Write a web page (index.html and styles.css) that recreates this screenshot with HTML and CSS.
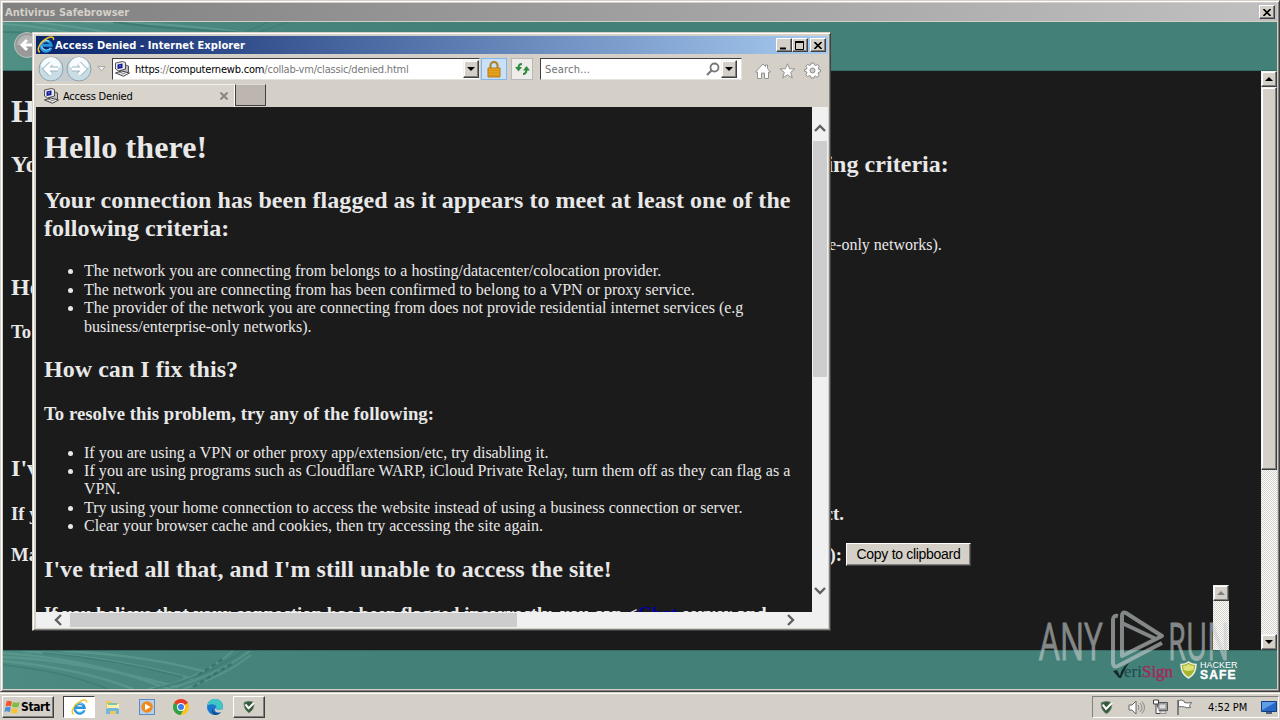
FILE: index.html
```html
<!DOCTYPE html>
<html lang="en">
<head>
<meta charset="UTF-8" />
<title>Antivirus Safebrowser</title>
<link rel="stylesheet" href="styles.css">
</head>
<body>

<!-- shared icons -->
<svg class="defs" width="0" height="0">
  <symbol id="ie" viewBox="0 0 16 16">
    <path d="M12.500 10.500A4.600 4.600 0 1 1 12.700 8.300H4.500" fill="none" stroke="#2793dd" stroke-width="2.400"/>
    <path d="M12 10.700A4.500 4.500 0 0 1 4 9M5 5.500q3-3 6-.5" fill="none" stroke="#85d4fa" stroke-width="0.9"/>
    <path d="M2.500 14.500C-1 12 3 5 9 2c4-2 6.500-1 5.500 1.500" fill="none" stroke="#f3c51f" stroke-width="1.300"/>
  </symbol>
  <symbol id="pc" viewBox="0 0 16 16">
    <path d="M9 3l5 2v6l-5 2-5-3z" fill="#bbb" stroke="#333" stroke-width="0.8"/>
    <path d="M1 2l7-1.500 3 1v6.500L4 10 1 8z" fill="#e8e8e8" stroke="#444" stroke-width="0.9"/>
    <path d="M3 3.500l5-1v4.500l-5 1z" fill="#101c9c"/>
    <path d="M5 4.500l1-.3v1l-1 .3z" fill="#fff"/>
    <path d="M1 12l6-2 8 2-6 3.200z" fill="#eee" stroke="#333" stroke-width="0.9"/>
    <path d="M4 12l4-1M7 13l4-1" stroke="#888"/>
  </symbol>
  <symbol id="shield" viewBox="0 0 16 16">
    <path d="M8 1.500l5.500 1.200c.5 6-1.500 9.300-5.500 11.800C4 12 2 8.700 2.500 2.700z" fill="#35593a" stroke="#64846a"/>
    <path d="M4 5l3.500 4.500L14 3" fill="none" stroke="#fff" stroke-width="2.300"/>
  </symbol>
</svg>

<div class="desktop">
  <div class="safebrowser">
    <div class="safe-title"><span>Antivirus Safebrowser</span>
      <button class="winbtn"><svg width="8" height="7" viewBox="0 0 8 7"><path d="M.5 0l7 7M7.500 0l-7 7" stroke="#000" stroke-width="1.600"/></svg></button>
    </div>
    <div class="safe-top">
      <svg class="swoosh" width="830" height="48">
        <g fill="none" stroke="#7bb5a8" opacity=".35">
          <path d="M0 2q90 5 180 46M30 0q100 10 210 42M80 0q100 0 200 16" stroke-width="2"/>
          <path d="M0 10q90 0 200 38M110 0q60 8 160 12" stroke="#29655d" stroke-width="2"/>
          <path d="M235 14L265 0M245 14L285 0" stroke="#2f6b64"/>
        </g>
      </svg>
      <svg class="back" width="26" height="26" viewBox="0 0 26 26"><circle cx="13" cy="13" r="12.500" fill="#999" stroke="#b9c4c0"/><path d="M3 13a10 10 0 0 1 20 0z" fill="#b5b5b5"/><path d="M21 13H8M13 8l-5 5 5 5" fill="none" stroke="#fff" stroke-width="3"/></svg>
    </div>
    <div class="safe-body">
      <div class="page">
        <h1>Hello there!</h1>
        <h2>Your connection has been flagged as it appears to meet at least one of the following criteria:</h2>
        <ul>
          <li>The network you are connecting from belongs to a hosting/datacenter/colocation provider.</li>
          <li>The network you are connecting from has been confirmed to belong to a VPN or proxy service.</li>
          <li>The provider of the network you are connecting from does not provide residential internet services (e.g business/enterprise-only networks).</li>
        </ul>
        <h2>How can I fix this?</h2>
        <h3>To resolve this problem, try any of the following:</h3>
        <ul>
          <li>If you are using a VPN or other proxy app/extension/etc, try disabling it.</li>
          <li>If you are using programs such as Cloudflare WARP, iCloud Private Relay, turn them off as they can flag as a VPN.</li>
          <li>Try using your home connection to access the website instead of using a business connection or server.</li>
          <li>Clear your browser cache and cookies, then try accessing the site again.</li>
        </ul>
        <h2>I've tried all that, and I'm still unable to access the site!</h2>
        <h3 class="split"><span>If you believe that your connection</span><span>contact.</span></h3>
        <h3 class="split copy"><span>Make sure to include</span><span>(required):</span><button>Copy to clipboard</button></h3>
        <div class="textarea-bar"><div class="cbtn off"><i class="up"></i></div></div>
      </div>
      <div class="classic-scroll">
        <div class="cbtn"><i class="up"></i></div>
        <div class="cthumb"></div>
        <div class="cbtn last"><i class="down"></i></div>
      </div>
    </div>
    <div class="safe-bottom">
      <svg class="swoosh" width="260" height="38">
        <g fill="none" stroke="#6eaa9e" opacity=".4" stroke-width="2.500">
          <path d="M0 2q90 6 165 36M20 0q90 6 170 28M60 0q80 4 140 20M0 10q80 8 130 28M0 6q70 2 175 30"/>
          <path d="M165 38q50-14 82-38M180 38q40-12 68-34M145 38q50-8 85-38" stroke-width="2"/>
          <path d="M40 2q70 6 140 24M0 14q60 6 105 24M150 38q50-10 90-38" stroke="#356f68" stroke-width="1.500"/>
          <path d="M195 24l25-16M190 36l40-24" stroke="#245f59" stroke-dasharray="5 3"/>
        </g>
      </svg>
      <div class="seals">
        <div class="verisign"><svg width="18" height="20" viewBox="0 0 18 20"><path d="M1 9l4-1 3 6c1-6 4-10 9-13-4 5-6 11-8 15H7z" fill="#17282b"/></svg><span>eri</span><b>Sign</b></div>
        <svg class="gold" width="17" height="18" viewBox="0 0 17 18"><path d="M8.500 1Q12 3.500 16 3.500 16 13 8.500 17 1 13 1 3.500 5 3.500 8.500 1z" fill="#a7b52a" stroke="#e9efe6" stroke-width="1.500"/><path d="M3 5q4 0 5.500-2Q11 5 14 5q0 3-1 4-5 2-9 0-1-2-1-4z" fill="#dde27b"/></svg>
        <div class="hacker"><span>HACKER</span><b>SAFE</b></div>
      </div>
    </div>
  </div>

  <div class="taskbar">
    <button class="start"><svg width="17" height="16" viewBox="0 0 17 16"><path d="M2.500 2.500Q5 1 8 3L7 7.500Q4 6 1.500 7.500z" fill="#ee5a2b"/><path d="M9 3q3 1.500 6.500 0l-1 5Q11 9 8 7.500z" fill="#7dbd42"/><path d="M1.300 8.500q3-1.500 5.500.3l-1 4.500q-3-2-5.300-.3z" fill="#4a91d8"/><path d="M8 9q3 1.500 6 .3L13 14q-3 1.300-6-.5z" fill="#f7c331"/></svg>Start</button>
    <div class="task active"><svg width="17" height="17"><use href="#ie"/></svg></div>
    <div class="task"><svg width="18" height="18" viewBox="0 0 18 18"><path d="M2 3h5l1 2h7v11H2z" fill="#e9c95b"/><path d="M3 6h12v5H3z" fill="#fbf0b0"/><path d="M4 5h9v2H4z" fill="#7cc4a4"/><path d="M2 16v-4q0-2 2-2h9q2 0 2 2v4h-3v-3H6v3z" fill="#73b6dc"/></svg></div>
    <div class="task"><svg width="16" height="16" viewBox="0 0 16 16"><rect x=".5" y=".5" width="15" height="15" fill="#b5d0ee" stroke="#5c8bbf"/><circle cx="8" cy="8" r="5.800" fill="#f18a1c"/><path d="M6 4.800l5.500 3.200L6 11.200z" fill="#fff"/></svg></div>
    <div class="task"><svg width="16" height="16" viewBox="0 0 16 16"><circle cx="8" cy="8" r="8" fill="#fcc31e"/><path d="M8 8L1.100 4A8 8 0 0 1 14.900 4z" fill="#e33b2e"/><path d="M1.100 4A8 8 0 0 0 7.500 16L11 10 8 8z" fill="#2ba24c"/><circle cx="8" cy="8" r="4" fill="#fff"/><circle cx="8" cy="8" r="3" fill="#3f7de8"/></svg></div>
    <div class="task"><svg width="16" height="16" viewBox="0 0 16 16"><circle cx="8" cy="8" r="8" fill="#1978cf"/><path d="M.3 7C1 2 4.500 0 8 0c5 0 8 3.500 8 7 0 3-2.500 4-4.500 4S9 10 9.500 8.500C9.500 5 3 4 .3 7z" fill="#40c6c3"/><path d="M9.500 8.500c-1 1.500 0 2.500 2 2.500s3.500-.5 4-2v3.500l-1 .5c-5 2-9-2-5-4.500z" fill="#d4d0c8"/><path d="M5.500 9c0 4 3.500 6.500 8.500 4.500A8 8 0 0 1 8 16c-3-1-4-4-2.500-7z" fill="#114a8c"/></svg></div>
    <div class="task raised"><svg width="14" height="14"><use href="#shield"/></svg></div>
    <div class="tray">
      <svg width="15" height="15"><use href="#shield"/></svg>
      <svg width="17" height="15" viewBox="0 0 17 15"><path d="M1 5h3l4-4v13L4 10H1z" fill="#fff" stroke="#666"/><path d="M10 5q2 2.500 0 5M12 3q4 4.500 0 9M14 1.500q5 6 0 12" fill="none" stroke="#888"/></svg>
      <svg width="17" height="16" viewBox="0 0 17 16"><path d="M5.500 3.500h10v8h-10z" fill="#aaa" stroke="#555"/><path d="M7 5h7v5H7zM8 12h6v2.500H8z" fill="#ddd" stroke="#777" stroke-width=".7"/><path d="M1.500 1v4h5V1zM4 5v9.500h4" fill="#fff" stroke="#444"/></svg>
      <svg width="17" height="16" viewBox="0 0 17 16"><path d="M2 1v15" stroke="#666" stroke-width="1.500"/><path d="M2.500 1.500q3-1.500 6 1v1q3 1 7 0l-2 3 1 2q-4 1-6-.5-3-1-6 0z" fill="#fff" stroke="#666"/></svg>
      <span class="clock">4:52 PM</span>
      <svg class="show-desktop" width="16" height="13" viewBox="0 0 16 13"><path d="M.5.5h15v10H.5z" fill="#2869c7" stroke="#183d7c"/><path d="M1 1h14L3 8 1 9z" fill="#5e9ee8"/><path d="M5 12h6" stroke="#49627f" stroke-width="2"/></svg>
    </div>
  </div>
</div>

<div class="ie-window">
  <div class="ie-title">
    <svg width="18" height="18"><use href="#ie"/></svg><span>Access Denied - Internet Explorer</span>
    <div class="winbtns">
      <button class="winbtn"><svg width="8" height="9" viewBox="0 0 8 9"><path d="M0 7.500h6" stroke="#000" stroke-width="2"/></svg></button>
      <button class="winbtn"><svg width="10" height="9" viewBox="0 0 10 9"><path d="M.5 0v8.500h8V0" fill="none" stroke="#000"/><path d="M0 1h9" stroke="#000" stroke-width="2"/></svg></button>
      <button class="winbtn close"><svg width="8" height="7" viewBox="0 0 8 7"><path d="M.5 0l7 7M7.500 0l-7 7" stroke="#000" stroke-width="1.600"/></svg></button>
    </div>
  </div>
  <div class="ie-toolbar">
    <svg class="nav" width="54" height="28" viewBox="0 0 54 28">
      <path d="M13 2h28v24H13z" fill="#c5ccd0"/>
      <g stroke="#8fa1ac" fill="#c9dde6"><circle cx="13" cy="14" r="12"/><circle cx="41" cy="14" r="12"/></g>
      <g fill="#f7fbfd"><path d="M3 12a10 10 0 0 1 20 0q-10 3-20 0zM31 12a10 10 0 0 1 20 0q-10 3-20 0z"/></g>
      <g fill="none" stroke="#9bb5c2" stroke-width="5"><path d="M20 14H8M13 8.500L7.500 14l5.500 5.500M34 14h12M41 8.500l5.500 5.500-5.500 5.500"/></g>
      <g fill="none" stroke="#fff" stroke-width="3.200"><path d="M20 14H8M13 8.500L7.500 14l5.500 5.500M34 14h12M41 8.500l5.500 5.500-5.500 5.500"/></g>
    </svg>
    <svg class="history" width="9" height="6" viewBox="0 0 9 6"><path d="M.8.500h7.400L4.500 5z" fill="#eee" stroke="#aaa"/></svg>
    <div class="address"><svg width="17" height="16"><use href="#pc"/></svg><span>https<i>://</i>computernewb.com<i>/collab-vm/classic/denied.html</i></span><div class="drop"><i class="down"></i></div></div>
    <div class="tool lock"><svg width="14" height="17" viewBox="0 0 14 17"><path d="M3.500 8V4.500a3.500 3.500 0 0 1 7 0V8" fill="none" stroke="#a9801f" stroke-width="2"/><path d="M1 7h12v9H1z" fill="#e9a51f" stroke="#b37816"/><path d="M1.500 9.500h11M1.500 12h11M1.500 14.500h11" stroke="#cf8a18" stroke-width=".8"/></svg></div>
    <div class="tool refresh"><svg width="15" height="14" viewBox="0 0 15 14"><path d="M7 2Q3.500 2 3.500 6M8 12q3.500 0 3.500-5" fill="none" stroke="#2f8b3c" stroke-width="2"/><path d="M0 5h7L3.500 9.500zM8 8.500h7L11.500 4z" fill="#2f8b3c"/></svg></div>
    <div class="search"><span>Search...</span><svg width="14" height="14" viewBox="0 0 14 14"><circle cx="8.500" cy="5.500" r="4" fill="none" stroke="#777" stroke-width="1.800"/><path d="M5.500 8.500L1 13" stroke="#777" stroke-width="2.200"/></svg><div class="drop"><i class="down"></i></div></div>
    <div class="commands">
      <svg width="16" height="16" viewBox="0 0 16 16"><path d="M8 1l2.500 2.500V2h2v3.500L15.500 9h-2v6.500h-4V10h-3v5.500h-4V9h-2z" fill="#fff" stroke="#929292"/></svg>
      <svg width="17" height="16" viewBox="0 0 17 16"><path d="M8.500.8l2.200 5h5.300l-4.300 3.500 1.600 5.700-4.800-3.200L3.700 15l1.600-5.700L1 5.800h5.300z" fill="#fff" stroke="#929292"/></svg>
      <svg width="17" height="17" viewBox="0 0 17 17"><path d="M7 1h3l.4 2 1.300.5L13.500 2.400l1.700 2-1 1.700.5 1.300 1.800.4v2l-2 .5-.4 1.300 1 1.900-1.900 1.700-1.700-1.100-1.300.5L10 16H7l-.4-1.900-1.300-.5-1.800 1L1.900 12.700 3 11l-.5-1.200L.6 9.300V7.500l2-.4L3 5.900 2 4.200l1.700-1.800 1.800 1L6.700 3z" fill="#fff" stroke="#8b8b8b"/><circle cx="8.500" cy="8.500" r="2.500" fill="#ccc" stroke="#8b8b8b"/></svg>
    </div>
  </div>
  <div class="ie-tabs">
    <div class="tab"><svg width="17" height="16"><use href="#pc"/></svg><span>Access Denied</span><svg width="8" height="8" viewBox="0 0 8 8"><path d="M.5.5l7 7M7.500.5l-7 7" stroke="#898580" stroke-width="2"/></svg></div>
    <div class="newtab"></div>
  </div>
  <div class="ie-view">
    <div class="page">
      <h1>Hello there!</h1>
      <h2>Your connection has been flagged as it appears to meet at least one of the following criteria:</h2>
      <ul>
        <li>The network you are connecting from belongs to a hosting/datacenter/colocation provider.</li>
        <li>The network you are connecting from has been confirmed to belong to a VPN or proxy service.</li>
        <li>The provider of the network you are connecting from does not provide residential internet services (e.g business/enterprise-only networks).</li>
      </ul>
      <h2>How can I fix this?</h2>
      <h3>To resolve this problem, try any of the following:</h3>
      <ul>
        <li>If you are using a VPN or other proxy app/extension/etc, try disabling it.</li>
        <li class="wide">If you are using programs such as Cloudflare WARP, iCloud Private Relay, turn them off as they can flag as a VPN.</li>
        <li>Try using your home connection to access the website instead of using a business connection or server.</li>
        <li>Clear your browser cache and cookies, then try accessing the site again.</li>
      </ul>
      <h2>I've tried all that, and I'm still unable to access the site!</h2>
      <h3>If you believe that your connection has been flagged incorrectly, you can &lt;<a>Chat</a> server and</h3>
    </div>
    <div class="vscroll">
      <svg width="12" height="8" viewBox="0 0 12 8"><path d="M1 7l5-5 5 5" fill="none" stroke="#606060" stroke-width="2.400"/></svg>
      <div class="vthumb"></div>
      <svg class="bottom" width="12" height="8" viewBox="0 0 12 8"><path d="M1 1l5 5 5-5" fill="none" stroke="#606060" stroke-width="2.400"/></svg>
    </div>
  </div>
  <div class="hscroll">
    <svg width="8" height="12" viewBox="0 0 8 12"><path d="M7 1L2 6l5 5" fill="none" stroke="#606060" stroke-width="2.400"/></svg>
    <div class="hthumb"></div>
    <svg class="right" width="8" height="12" viewBox="0 0 8 12"><path d="M1 1l5 5-5 5" fill="none" stroke="#606060" stroke-width="2.400"/></svg>
  </div>
</div>

<div class="watermark">
  <span>ANY</span>
  <svg width="56" height="62" viewBox="0 0 56 62" fill="none" stroke="#c9cfcf" stroke-width="4" stroke-linejoin="round"><path d="M8 7Q3 6 3 11V54q0 5 5 3L52 34"/><path d="M46 30L12 14V47L52 27 16 4Q12 2 12 7V14"/></svg>
  <span class="run">RUN</span>
</div>

</body>
</html>
```
FILE: styles.css
```css
* {
  box-sizing: border-box;
}
body {
  margin: 0;
  width: 1280px;
  height: 720px;
  overflow: hidden;
  position: relative;
  background: #d4d0c8;
  font-family: "DejaVu Sans Condensed", "DejaVu Sans", sans-serif;
  font-size: 11px;
}
svg {
  display: block;
  flex: none;
}
.defs {
  position: absolute;
}
button {
  font-family: inherit;
  padding: 0;
  margin: 0;
}
.desktop {
  height: 720px;
  display: flex;
  flex-direction: column;
}

/* background window */
.safebrowser {
  height: 692px;
  display: flex;
  flex-direction: column;
  border: 1px solid #d4d0c8;
  border-right-color: #404040;
  border-bottom-color: #404040;
  box-shadow: inset 1px 1px #fff, inset -1px -1px #808080;
  padding: 2px;
}
.safe-title {
  height: 19px;
  flex: none;
  display: flex;
  align-items: center;
  justify-content: space-between;
  padding: 0 2px;
  background: linear-gradient(90deg, #808080, #c0c0c0);
  border-bottom: 1px solid #d4d0c8;
  color: #d4d0c8;
  font-weight: bold;
}
.winbtn {
  width: 16px;
  height: 14px;
  display: flex;
  align-items: center;
  justify-content: center;
  background: #d4d0c8;
  border: 1px solid;
  border-color: #fff #404040 #404040 #fff;
  box-shadow: inset -1px -1px #808080;
}
.safe-top {
  height: 49px;
  flex: none;
  position: relative;
  background: linear-gradient(90deg, #4f8f84, #438077 35%);
  border-bottom: 1px solid #356e69;
}
.swoosh {
  position: absolute;
  left: 0;
  top: 0;
}
.back {
  position: absolute;
  left: 11px;
  top: 10px;
}
.safe-body {
  height: 579px;
  flex: none;
  display: flex;
  background: #1b1b1b;
}
.page {
  flex: 1;
  min-width: 0;
  padding: 0 8px;
  overflow: hidden;
  color: #e8e8e8;
  font-family: "Liberation Serif", serif;
  font-size: 16px;
  line-height: 18.4px;
}
.page h1 {
  font-size: 32px;
  line-height: 37px;
  margin: 21.9px 0 21.4px;
  letter-spacing: 0.1px;
}
.page h2 {
  font-size: 24px;
  line-height: 27.6px;
  margin: 19.9px 0;
  letter-spacing: 0.04px;
}
.page h3 {
  font-size: 18.72px;
  line-height: 21.6px;
  margin: 18.7px 0;
  letter-spacing: 0.045px;
}
.page ul {
  margin: 0;
  padding-left: 40px;
}
.page .wide {
  letter-spacing: 0.055px;
}
.page a {
  color: #0000a8;
  text-decoration: underline;
}
.split {
  display: flex;
  width: 833px;
  justify-content: space-between;
}
.copy {
  width: 960px;
  align-items: center;
}
.copy span:first-child {
  width: 739px;
}
.copy button {
  width: 125px;
  height: 23px;
  font: 14px "Liberation Sans", sans-serif;
  letter-spacing: -0.3px;
  color: #000;
  background: #d4d0c8;
  border: 1px solid;
  border-color: #fff #404040 #404040 #fff;
  box-shadow: inset -1px -1px #808080;
}
.textarea-bar {
  width: 16px;
  height: 80px;
  margin-left: 1202px;
}
.textarea-bar,
.classic-scroll {
  background: repeating-conic-gradient(#fff 0 25%, #d4d0c8 0 50%) 0 0 / 2px 2px;
}
.classic-scroll {
  width: 16px;
  flex: none;
  display: flex;
  flex-direction: column;
}
.cbtn {
  height: 16px;
  width: 16px;
  flex: none;
  display: flex;
  align-items: center;
  justify-content: center;
}
.cbtn,
.cthumb,
.drop {
  background: #d4d0c8;
  border: 1px solid;
  border-color: #f4f2ee #404040 #404040 #f4f2ee;
  box-shadow: inset -1px -1px #808080, inset 1px 1px #fff;
}
.cthumb {
  height: 383px;
}
.last {
  margin-top: auto;
}
.up,
.down {
  border: 4px solid transparent;
  border-top-width: 0;
  border-bottom-color: #000;
}
.down {
  border-top: 4px solid #000;
  border-bottom: 0;
}
.off .up {
  border-bottom-color: #808080;
}
.safe-bottom {
  flex: 1;
  position: relative;
  display: flex;
  justify-content: flex-end;
  background: linear-gradient(90deg, #4c8b81, #438077 30%);
  border-top: 1px solid #376b65;
}
.seals {
  display: flex;
  align-items: center;
  margin-right: 39px;
}
.verisign {
  display: flex;
  align-items: center;
  width: 68px;
  padding-top: 3px;
  color: #1c4a50;
  font: 17px "Liberation Serif", serif;
}
.verisign span {
  margin-left: -6px;
}
.verisign b {
  color: #a3285b;
  font-weight: normal;
  -webkit-text-stroke: 0.4px #a3285b;
}
.gold {
  margin-right: 3px;
}
.hacker {
  width: 38px;
  color: #fff;
  font: 9px/9px "Liberation Sans", sans-serif;
  display: flex;
  flex-direction: column;
}
.hacker b {
  font-family: "Liberation Sans", sans-serif;
  font-size: 12px;
  line-height: 10px;
  letter-spacing: 1.2px;
  -webkit-text-stroke: 0.4px #fff;
}

/* taskbar */
.taskbar {
  height: 28px;
  display: flex;
  align-items: center;
  border-top: 1px solid #d4d0c8;
  box-shadow: inset 0 1px #fff;
  padding: 2px 1px 1px 2px;
}
.start {
  width: 52px;
  height: 22px;
  display: flex;
  align-items: center;
  padding-left: 1px;
  margin-right: 9px;
  font-weight: bold;
  font-size: 12px;
  letter-spacing: -0.4px;
}
.start,
.raised {
  background: #d4d0c8;
  border: 1px solid;
  border-color: #fff #404040 #404040 #fff;
  box-shadow: inset -1px -1px #808080;
}
.task {
  width: 32px;
  height: 22px;
  margin-right: 2px;
  display: flex;
  align-items: center;
  justify-content: center;
}
.active {
  background: #fff;
  border: 1px solid;
  border-color: #404040 #fff #fff #404040;
}
.tray {
  margin-left: auto;
  width: 187px;
  height: 22px;
  display: flex;
  align-items: center;
  gap: 7px;
  padding-left: 6px;
  border: 1px solid;
  border-color: #808080 #fff #fff #808080;
}
.tray svg:first-child {
  margin-right: 7px;
}
.clock {
  margin-left: 8px;
  white-space: nowrap;
  letter-spacing: -0.1px;
}
.show-desktop {
  margin-left: auto;
  margin-right: 1px;
}

/* Internet Explorer window */
.ie-window {
  position: absolute;
  left: 32px;
  top: 32px;
  width: 799px;
  height: 599px;
  display: flex;
  flex-direction: column;
  padding: 3px 2px 3px 3px;
  background: #d4d0c8;
  border: 1px solid #d4d0c8;
  border-right-color: #404040;
  border-bottom-color: #404040;
  box-shadow: inset 1px 1px #fff, inset -1px -1px #808080;
}
.ie-title {
  height: 18px;
  flex: none;
  display: flex;
  align-items: center;
  padding: 0 2px 0 1px;
  background: linear-gradient(90deg, #0a246a, #a6caf0);
  color: #fff;
  font-weight: bold;
}
.ie-title span {
  letter-spacing: 0.08px;
}
.winbtns {
  margin-left: auto;
  display: flex;
}
.close {
  margin-left: 2px;
}
.ie-toolbar {
  height: 30px;
  flex: none;
  display: flex;
  align-items: center;
  padding-left: 2px;
}
.history {
  margin: 0 6px 0 5px;
}
.address,
.search {
  height: 22px;
  display: flex;
  align-items: center;
  background: #fff;
  border: 1px solid;
  border-color: #404040 #e6e3dd #e6e3dd #404040;
}
.address {
  width: 368px;
  padding-left: 1px;
}
.address span {
  margin-left: 4px;
  white-space: nowrap;
  letter-spacing: -0.2px;
}
.address span i {
  font-style: normal;
  color: #777;
}
.drop {
  width: 16px;
  height: 18px;
  margin-left: auto;
  display: flex;
  align-items: center;
  justify-content: center;
}
.tool {
  height: 22px;
  display: flex;
  align-items: center;
  justify-content: center;
}
.lock {
  width: 26px;
  margin-left: 1px;
  background: #c9e0f8;
  border: 1px solid #85b6e8;
}
.refresh {
  width: 22px;
  margin: 0 7px 0 4px;
  background: #eeecea;
  border: 1px solid #b8b8b8;
}
.search {
  width: 202px;
  padding: 0 4px 0 4px;
  color: #707070;
}
.search svg {
  margin-left: auto;
}
.search .drop {
  margin-left: 1px;
}
.search span {
  letter-spacing: 0.2px;
}
.commands {
  display: flex;
  align-items: center;
  gap: 8px;
  margin: 3px 0 0 13px;
}
.ie-tabs {
  height: 23px;
  flex: none;
  display: flex;
}
.tab {
  width: 199px;
  display: flex;
  align-items: center;
  padding: 0 6px 0 7px;
  border-top: 1px solid #f3f1ed;
  border-right: 1px solid #fff;
  background: #d8d4cc;
}
.tab span {
  flex: 1;
  margin-left: 3px;
  letter-spacing: -0.2px;
}
.newtab {
  width: 31px;
  height: 22px;
  background: #bdb6ae;
  border: 1px solid #404040;
  border-top-color: #ded9d2;
}
.ie-view {
  height: 505px;
  flex: none;
  display: flex;
  background: #1b1b1b;
}
.vscroll {
  width: 16px;
  flex: none;
  display: flex;
  flex-direction: column;
  align-items: center;
  padding: 17px 0;
  background: #f0f0f0;
}
.vthumb {
  width: 14px;
  height: 236px;
  margin-top: 9px;
  background: #cdcdcd;
}
.bottom {
  margin-top: auto;
}
.hscroll {
  height: 16px;
  flex: none;
  display: flex;
  align-items: center;
  padding: 0 33px 0 18px;
  background: #f0f0f0;
}
.hthumb {
  width: 447px;
  height: 14px;
  margin-left: 8px;
  background: #cdcdcd;
}
.right {
  margin-left: auto;
}

.watermark {
  position: absolute;
  left: 1039px;
  top: 609px;
  display: flex;
  align-items: center;
  opacity: 0.6;
  color: #c9cfcf;
  font: 51px/62px "Open Sans", "Liberation Sans", sans-serif;
}
.watermark span {
  width: 63px;
  white-space: nowrap;
  transform: scaleX(0.64);
  transform-origin: 0 50%;
  -webkit-text-stroke: 0.8px #c9cfcf;
}
.watermark .run {
  transform: scaleX(0.57);
}
.watermark svg {
  margin: 0 2px 0 8px;
}
```
